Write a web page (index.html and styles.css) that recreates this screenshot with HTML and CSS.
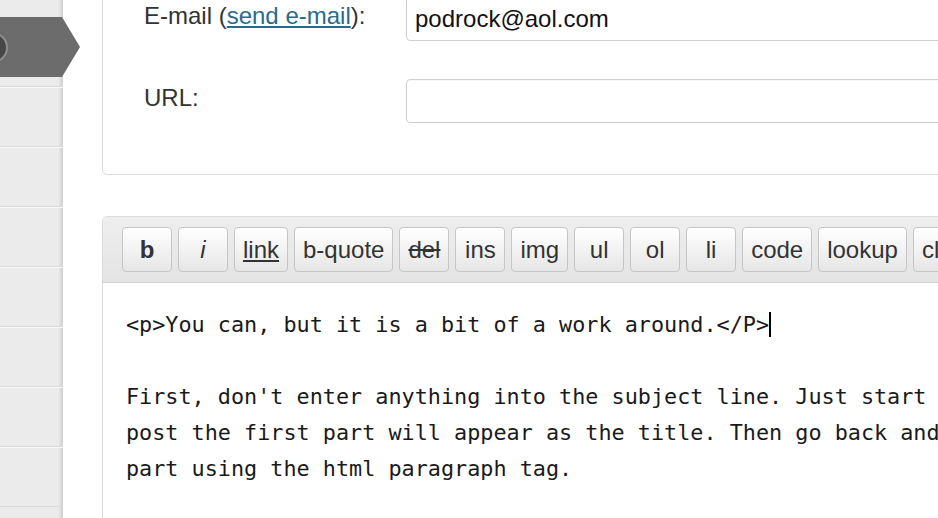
FILE: index.html
```html
<!DOCTYPE html>
<html lang="en">
<head>
<meta charset="utf-8">
<title>Edit post</title>
<link rel="stylesheet" href="styles.css">
</head>
<body>
<div class="page">
  <aside class="sidebar">
    <ul class="nav">
      <li></li><li></li><li></li><li></li><li></li><li></li><li></li><li></li><li></li>
    </ul>
    <div class="nav-tab"><span class="tab-dot"></span></div>
  </aside>
  <main class="main">
    <section class="card profile">
      <div class="field">
        <label class="field-label">E-mail (<a class="mail-link" href="#">send e-mail</a>):</label>
        <input class="field-input" type="text" value="podrock@aol.com">
      </div>
      <div class="field">
        <label class="field-label">URL:</label>
        <input class="field-input" type="text" value="">
      </div>
    </section>
    <section class="card editor">
      <div class="toolbar">
        <button class="tb-btn tb-bold">b</button>
        <button class="tb-btn tb-italic">i</button>
        <button class="tb-btn tb-link">link</button>
        <button class="tb-btn">b-quote</button>
        <button class="tb-btn tb-del">del</button>
        <button class="tb-btn">ins</button>
        <button class="tb-btn">img</button>
        <button class="tb-btn">ul</button>
        <button class="tb-btn">ol</button>
        <button class="tb-btn">li</button>
        <button class="tb-btn">code</button>
        <button class="tb-btn">lookup</button>
        <button class="tb-btn">close tags</button>
      </div>
      <div class="editor-body">
        <div class="line">&lt;p&gt;You can, but it is a bit of a work around.&lt;/P&gt;<span class="caret"></span></div>
        <div class="line"> </div>
        <div class="line">First, don't enter anything into the subject line. Just start typing your</div>
        <div class="line">post the first part will appear as the title. Then go back and format the</div>
        <div class="line">part using the html paragraph tag.</div>
      </div>
    </section>
  </main>
</div>
</body>
</html>
```

FILE: styles.css
```css
html, body {
  margin: 0;
  padding: 0;
  overflow: hidden;
  background: #fff;
}

body {
  font-family: "Liberation Sans", Arial, sans-serif;
  color: #333;
}

.page {
  display: flex;
  width: 1200px;
  height: 518px;
}

.sidebar {
  position: relative;
  flex: 0 0 63px;
  background: linear-gradient(to right, #ebebeb 0, #ebebeb 58px, #e2e2e2 60px, #d6d6d6 61px, #d0d0d0 63px);
  overflow: visible;
}

.nav {
  list-style: none;
  margin: -33px 0 0 0;
  padding: 0;
}

.nav li {
  height: 58px;
  border-top: 1px solid #f7f7f7;
  border-bottom: 1px solid #dadada;
}

.nav-tab {
  position: absolute;
  top: 17px;
  left: 0;
  width: 80px;
  height: 60px;
  background: #6c6c6c;
  clip-path: polygon(0 0, 62px 0, 80px 50%, 62px 100%, 0 100%);
  overflow: hidden;
}

.tab-dot {
  position: absolute;
  left: -23px;
  top: 15px;
  width: 27px;
  height: 27px;
  border-radius: 50%;
  background: #474747;
  border: 2px solid #8e8e8e;
}

.main {
  flex: 1 1 auto;
  padding-left: 39px;
  display: flex;
  flex-direction: column;
  gap: 41px;
}

.card {
  width: 1060px;
  border: 1px solid #dcdcdc;
  border-radius: 5px;
  background: #fff;
}

.profile {
  margin-top: -25px;
  padding: 21px 0 51px 41px;
  display: flex;
  flex-direction: column;
  gap: 38px;
}

.field {
  display: grid;
  grid-template-columns: 262px 1fr;
  align-items: start;
}

.field-label {
  padding-top: 5px;
  font-size: 24px;
  line-height: 27px;
  color: #333;
}

.mail-link {
  color: #2a6b8c;
  text-decoration: underline;
}

.field-input {
  box-sizing: border-box;
  height: 44px;
  width: 700px;
  border: 1px solid #cfcfcf;
  border-radius: 4px;
  padding: 0 8px;
  font-family: "Liberation Sans", Arial, sans-serif;
  font-size: 24px;
  color: #111;
  background: #fff;
  box-shadow: inset 0 1px 1px rgba(0,0,0,0.04);
}

.editor {
  overflow: hidden;
  min-height: 320px;
}

.toolbar {
  display: flex;
  gap: 6px;
  padding: 10px 19px 10px;
  background: linear-gradient(to bottom, #eeeeee, #e4e4e4);
  border-bottom: 1px solid #d4d4d4;
}

.tb-btn {
  box-sizing: border-box;
  height: 45px;
  min-width: 50px;
  padding: 0 8px;
  border: 1px solid #c6c6c6;
  border-radius: 4px;
  background: linear-gradient(to bottom, #ffffff, #e6e6e6);
  font-family: "Liberation Sans", Arial, sans-serif;
  font-size: 24px;
  color: #333;
  white-space: nowrap;
}

.tb-bold { font-weight: bold; }
.tb-italic { font-style: italic; }
.tb-link { text-decoration: underline; }
.tb-del { text-decoration: line-through; }

.editor-body {
  padding: 24px 23px 40px;
  font-family: "DejaVu Sans Mono", "Liberation Mono", monospace;
  font-size: 21.8px;
  line-height: 36px;
  color: #1a1a1a;
}

.line {
  white-space: pre;
  height: 36px;
}

.caret {
  display: inline-block;
  width: 0;
  height: 25px;
  border-right: 2px solid #000;
  vertical-align: -5px;
}
```
